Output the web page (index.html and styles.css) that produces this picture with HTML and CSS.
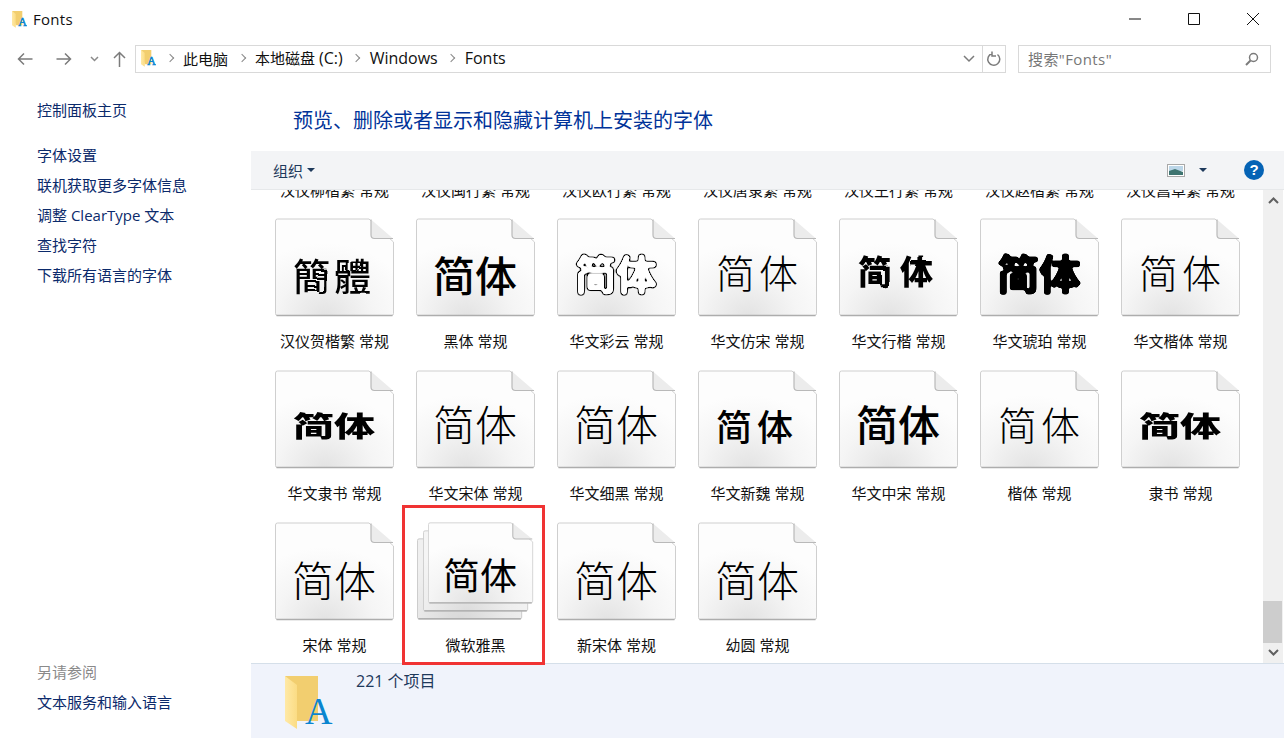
FILE: index.html
```html
<!DOCTYPE html>
<html lang="en">
<head>
    <meta charset="UTF-8">
    <title>Fonts</title>
    <link rel="stylesheet" href="styles.css">
</head>
<body>
    <svg class="defs" width="0" height="0">
        <defs>
            <radialGradient id="sheetFill" cx="0.42" cy="1" r="0.75">
                <stop offset="0" stop-color="#e3e3e3"/>
                <stop offset="0.55" stop-color="#f5f5f5"/>
                <stop offset="1" stop-color="#fdfdfd"/>
            </radialGradient>
            <linearGradient id="flapFill" x1="0" y1="0" x2="1" y2="0">
                <stop offset="0" stop-color="#ffe9a6"/>
                <stop offset="1" stop-color="#fbdc84"/>
            </linearGradient>
            <symbol id="sheet" viewBox="0 0 120 100" preserveAspectRatio="none">
                <path d="M2.500 1H94L118.500 24V95.500Q118.500 97.500 116.500 97.500H2.500Q0.500 97.500 0.500 95.500V3Q0.500 1 2.500 1Z" fill="url(#sheetFill)" stroke="#cfcfcf"/>
                <path d="M96 1.500V17Q96 20.500 99.500 20.500H118Z" fill="#ececec"/>
                <path d="M96 1.500V17Q96 20.500 99.500 20.500H118" fill="none" stroke="#b9b9b9" stroke-width="1.200"/>
                <path d="M1.500 97.500H117.500" stroke="#adadad" stroke-width="1.500"/>
            </symbol>
            <symbol id="fontFolder" viewBox="0 0 48 54">
                <path d="M0 0H33V45H12Z" fill="#f2ce6f"/>
                <path d="M0 0L12 9V53L0 45Z" fill="url(#flapFill)"/>
                <text x="20" y="48" class="folder-letter">A</text>
            </symbol>
            <filter id="puffy" x="-15%" y="-15%" width="130%" height="130%">
                <feGaussianBlur in="SourceAlpha" stdDeviation="1.500" result="soft"/>
                <feComponentTransfer in="soft" result="outer">
                    <feFuncA type="linear" slope="6" intercept="-0.500"/>
                </feComponentTransfer>
                <feComponentTransfer in="soft" result="innerAlpha">
                    <feFuncA type="linear" slope="6" intercept="-1.800"/>
                </feComponentTransfer>
                <feColorMatrix in="innerAlpha" type="matrix" values="0 0 0 0 1 0 0 0 0 1 0 0 0 0 1 0 0 0 1 0" result="inner"/>
                <feMerge>
                    <feMergeNode in="outer"/>
                    <feMergeNode in="inner"/>
                </feMerge>
            </filter>
            <filter id="fat" x="-15%" y="-15%" width="130%" height="130%">
                <feGaussianBlur in="SourceAlpha" stdDeviation="1.100" result="soft"/>
                <feComponentTransfer in="soft">
                    <feFuncA type="linear" slope="5" intercept="-1.200"/>
                </feComponentTransfer>
            </filter>
            <filter id="wobble" x="-10%" y="-10%" width="120%" height="120%">
                <feTurbulence type="fractalNoise" baseFrequency="0.05" numOctaves="1" seed="4" result="noise"/>
                <feDisplacementMap in="SourceGraphic" in2="noise" scale="3"/>
            </filter>
        </defs>
    </svg>

    <header class="titlebar">
        <div class="title">
            <svg class="title-icon"><use href="#fontFolder"/></svg>
            <span>Fonts</span>
        </div>
        <div class="window-buttons">
            <svg width="14" height="14" viewBox="0 0 14 14"><path d="M1 7H13" stroke="#111" fill="none"/></svg>
            <svg width="14" height="14" viewBox="0 0 14 14"><path d="M1.500 1.500H12.500V12.500H1.500Z" stroke="#111" fill="none"/></svg>
            <svg width="14" height="14" viewBox="0 0 14 14"><path d="M1 1L13 13M13 1L1 13" stroke="#111" fill="none"/></svg>
        </div>
    </header>

    <nav class="navbar">
        <div class="nav-arrows">
            <svg class="back-arrow" width="16" height="14" viewBox="0 0 16 14"><path d="M15.500 7H1.500M7 1.500L1.500 7L7 12.500" stroke="#7b7b7b" stroke-width="1.500" fill="none"/></svg>
            <svg class="forward-arrow" width="16" height="14" viewBox="0 0 16 14"><path d="M0.500 7H14.500M9 1.500L14.500 7L9 12.500" stroke="#7b7b7b" stroke-width="1.500" fill="none"/></svg>
            <svg class="recent-arrow" width="9" height="6" viewBox="0 0 9 6"><path d="M1 1L4.500 4.500L8 1" stroke="#8a8a8a" stroke-width="1.500" fill="none"/></svg>
            <svg class="up-arrow" width="13" height="16" viewBox="0 0 13 16"><path d="M6.500 16V1.500M1 7L6.500 1.500L12 7" stroke="#7b7b7b" stroke-width="1.500" fill="none"/></svg>
        </div>
        <div class="address">
            <svg class="address-icon"><use href="#fontFolder"/></svg>
            <span class="crumb-sep"></span><span>此电脑</span>
            <span class="crumb-sep"></span><span>本地磁盘 <span class="latin">(C:)</span></span>
            <span class="crumb-sep"></span><span class="latin">Windows</span>
            <span class="crumb-sep"></span><span class="latin">Fonts</span>
            <div class="address-end">
                <svg width="12" height="8" viewBox="0 0 12 8"><path d="M1 1L6 6L11 1" stroke="#7b7b7b" stroke-width="1.500" fill="none"/></svg>
                <svg class="refresh" width="16" height="16" viewBox="0 0 16 16"><path d="M6 2.500A6 6 0 1 0 11.500 3.500M6 0.500V5H10" stroke="#7b7b7b" stroke-width="1.500" fill="none"/></svg>
            </div>
        </div>
        <div class="search">
            <span>搜索"Fonts"</span>
            <svg width="14" height="14" viewBox="0 0 14 14"><circle cx="8.500" cy="5.500" r="4" stroke="#7b7b7b" stroke-width="1.500" fill="none"/><path d="M5.500 8.500L1 13" stroke="#7b7b7b" stroke-width="2"/></svg>
        </div>
    </nav>

    <div class="main">
        <aside class="sidebar">
            <div class="side-links">
                <a class="home-link">控制面板主页</a>
                <a>字体设置</a>
                <a>联机获取更多字体信息</a>
                <a>调整 ClearType 文本</a>
                <a>查找字符</a>
                <a>下载所有语言的字体</a>
            </div>
            <div class="side-bottom">
                <div class="see-also">另请参阅</div>
                <a>文本服务和输入语言</a>
            </div>
        </aside>

        <section class="content">
            <h1>预览、删除或者显示和隐藏计算机上安装的字体</h1>
            <div class="toolbar">
                <div class="organize">组织<span class="caret"></span></div>
                <div class="view-tools">
                    <svg width="18" height="13" viewBox="0 0 18 13">
                        <rect x="0.500" y="0.500" width="17" height="12" fill="#fff" stroke="#a8a8a8"/>
                        <rect x="2" y="2" width="14" height="5" fill="#bcd6e8"/>
                        <path d="M2 7L8 5L16 8V11H2Z" fill="#3e7470"/>
                    </svg>
                    <span class="caret view-caret"></span>
                    <span class="help">?</span>
                </div>
            </div>
            <div class="list-wrap">
                <div class="list">
                    <div class="label-row">
                        <span>汉仪柳楷繁 常规</span><span>汉仪闽行繁 常规</span><span>汉仪欧行繁 常规</span><span>汉仪唐隶繁 常规</span><span>汉仪王行繁 常规</span><span>汉仪赵楷繁 常规</span><span>汉仪菖草繁 常规</span>
                    </div>
                    <div class="grid">
                        <div class="tile"><div class="doc"><svg class="sheet"><use href="#sheet"/></svg><span class="sample trad">簡體</span></div><p>汉仪贺楷繁 常规</p></div>
                        <div class="tile"><div class="doc"><svg class="sheet"><use href="#sheet"/></svg><span class="sample medium">简体</span></div><p>黑体 常规</p></div>
                        <div class="tile"><div class="doc"><svg class="sheet"><use href="#sheet"/></svg><span class="sample cloud">简体</span></div><p>华文彩云 常规</p></div>
                        <div class="tile"><div class="doc"><svg class="sheet"><use href="#sheet"/></svg><span class="sample kai">简体</span></div><p>华文仿宋 常规</p></div>
                        <div class="tile"><div class="doc"><svg class="sheet"><use href="#sheet"/></svg><span class="sample brush">简体</span></div><p>华文行楷 常规</p></div>
                        <div class="tile"><div class="doc"><svg class="sheet"><use href="#sheet"/></svg><span class="sample heavy">简体</span></div><p>华文琥珀 常规</p></div>
                        <div class="tile"><div class="doc"><svg class="sheet"><use href="#sheet"/></svg><span class="sample kai">简体</span></div><p>华文楷体 常规</p></div>

                        <div class="tile"><div class="doc"><svg class="sheet"><use href="#sheet"/></svg><span class="sample wide">简体</span></div><p>华文隶书 常规</p></div>
                        <div class="tile"><div class="doc"><svg class="sheet"><use href="#sheet"/></svg><span class="sample thin">简体</span></div><p>华文宋体 常规</p></div>
                        <div class="tile"><div class="doc"><svg class="sheet"><use href="#sheet"/></svg><span class="sample raise">简体</span></div><p>华文细黑 常规</p></div>
                        <div class="tile"><div class="doc"><svg class="sheet"><use href="#sheet"/></svg><span class="sample wei">简体</span></div><p>华文新魏 常规</p></div>
                        <div class="tile"><div class="doc"><svg class="sheet"><use href="#sheet"/></svg><span class="sample medium raise">简体</span></div><p>华文中宋 常规</p></div>
                        <div class="tile"><div class="doc"><svg class="sheet"><use href="#sheet"/></svg><span class="sample kai">简体</span></div><p>楷体 常规</p></div>
                        <div class="tile"><div class="doc"><svg class="sheet"><use href="#sheet"/></svg><span class="sample wide">简体</span></div><p>隶书 常规</p></div>

                        <div class="tile"><div class="doc"><svg class="sheet"><use href="#sheet"/></svg><span class="sample">简体</span></div><p>宋体 常规</p></div>
                        <div class="tile selected-tile">
                            <div class="doc stack">
                                <svg class="sheet back2"><use href="#sheet"/></svg>
                                <svg class="sheet back1"><use href="#sheet"/></svg>
                                <svg class="sheet front"><use href="#sheet"/></svg>
                                <span class="sample stack-sample">简体</span>
                            </div>
                            <p>微软雅黑</p>
                        </div>
                        <div class="tile"><div class="doc"><svg class="sheet"><use href="#sheet"/></svg><span class="sample">简体</span></div><p>新宋体 常规</p></div>
                        <div class="tile"><div class="doc"><svg class="sheet"><use href="#sheet"/></svg><span class="sample">简体</span></div><p>幼圆 常规</p></div>
                    </div>
                </div>
                <div class="scrollbar">
                    <svg width="11" height="7" viewBox="0 0 11 7"><path d="M1 6L5.500 1.500L10 6" stroke="#606060" stroke-width="2" fill="none"/></svg>
                    <div class="track"><div class="thumb"></div></div>
                    <svg width="11" height="7" viewBox="0 0 11 7"><path d="M1 1L5.500 5.500L10 1" stroke="#606060" stroke-width="2" fill="none"/></svg>
                </div>
            </div>
            <footer class="status">
                <svg class="status-icon"><use href="#fontFolder"/></svg>
                <span>221 个项目</span>
            </footer>
        </section>
    </div>
</body>
</html>
```

FILE: styles.css
```css
html, body {
    margin: 0;
    height: 738px;
    overflow: hidden;
}
body {
    font-family: "Open Sans", "Noto Sans CJK SC", sans-serif;
    font-size: 15px;
    color: #111;
    background-color: #fff;
}
.defs {
    position: absolute;
}
.folder-letter {
    font-family: "Liberation Serif", serif;
    font-size: 38px;
    fill: #0a85cf;
    stroke: #0a85cf;
    stroke-width: var(--letter-weight, 0);
}

/* Title bar */
.titlebar {
    height: 38px;
    display: flex;
    justify-content: space-between;
    align-items: center;
}
.title {
    display: flex;
    align-items: center;
    gap: 6px;
    padding-left: 12px;
    letter-spacing: 0.3px;
}
.title-icon {
    width: 15px;
    height: 17px;
    --letter-weight: 2px;
}
.window-buttons {
    display: flex;
    gap: 45px;
    padding-right: 24px;
}

/* Address row */
.navbar {
    height: 28px;
    padding: 7px 0;
    display: flex;
    align-items: stretch;
}
.nav-arrows {
    width: 135px;
    display: flex;
    align-items: center;
    padding-left: 17px;
    box-sizing: border-box;
}
.forward-arrow {
    margin-left: 23px;
}
.recent-arrow {
    margin-left: 18px;
}
.up-arrow {
    margin-left: 14px;
}
.address {
    width: 871px;
    border: 1px solid #d9d9d9;
    box-sizing: border-box;
    display: flex;
    align-items: center;
    padding: 0 0 2px 5px;
}
.latin {
    font-size: 16px;
}
.address-icon {
    width: 15px;
    height: 17px;
    --letter-weight: 2px;
}
.crumb-sep {
    width: 6px;
    height: 6px;
    box-sizing: border-box;
    border-top: 1.500px solid #888;
    border-right: 1.500px solid #888;
    transform: rotate(45deg);
    margin: 0 10.500px;
}
.address-end {
    margin-left: auto;
    margin-bottom: -2px;
    height: 100%;
    display: flex;
    align-items: center;
    gap: 7px;
}
.refresh {
    border-left: 1px solid #d9d9d9;
    padding: 5px 3px;
}
.search {
    width: 253px;
    margin-left: 12px;
    border: 1px solid #d9d9d9;
    box-sizing: border-box;
    display: flex;
    justify-content: space-between;
    align-items: center;
    padding: 0 11px 0 9px;
    letter-spacing: 0.4px;
    color: #777;
}
.search span {
    margin-bottom: 2px;
}

/* Body of the window */
.main {
    display: flex;
    height: 658px;
}
.sidebar {
    width: 251px;
    padding: 20px 0 0 37px;
    box-sizing: border-box;
    display: flex;
    flex-direction: column;
    justify-content: space-between;
    color: #0b2a6b;
}
.side-links {
    display: flex;
    flex-direction: column;
    gap: 10px;
}
.side-links a, .side-bottom a {
    display: block;
    height: 20px;
    line-height: 20px;
    color: #0b2a6b;
}
.home-link {
    margin-bottom: 15px;
}
.side-bottom {
    padding-bottom: 26px;
}
.see-also {
    color: #8a8a8a;
    height: 20px;
    line-height: 20px;
    margin-bottom: 10px;
}
.content {
    flex: 1;
    min-width: 0;
    display: flex;
    flex-direction: column;
}
h1 {
    margin: 0;
    height: 71px;
    padding: 27px 0 0 42px;
    box-sizing: border-box;
    font-size: 20px;
    font-weight: 400;
    line-height: 28px;
    color: #003399;
}
.toolbar {
    height: 38px;
    background-color: #f3f4f6;
    border-bottom: 1px solid #e6e8ea;
    display: flex;
    justify-content: space-between;
    align-items: center;
    padding: 0 20px 0 22px;
    color: #1e395b;
}
.organize {
    display: flex;
    align-items: center;
    gap: 4px;
}
.caret {
    width: 0;
    height: 0;
    border-left: 4px solid transparent;
    border-right: 4px solid transparent;
    border-top: 4px solid #1e395b;
}
.view-tools {
    display: flex;
    align-items: center;
}
.view-caret {
    margin: 0 37px 0 14px;
}
.help {
    width: 20px;
    height: 20px;
    border-radius: 50%;
    background-color: #0563b5;
    color: #fff;
    font-family: "Liberation Sans", sans-serif;
    font-weight: 700;
    font-size: 15px;
    line-height: 20px;
    text-align: center;
}

/* Icon list */
.list-wrap {
    height: 474px;
    display: flex;
    border-bottom: 1px solid #d5dfe9;
    box-sizing: border-box;
}
.list {
    width: 1012px;
}
/* row that scrolled away under the toolbar, only the lower half of it shows */
.label-row {
    height: 10px;
    margin-bottom: 18px;
    overflow: hidden;
    padding-left: 24px;
    display: grid;
    grid-template-columns: repeat(7, 141px);
}
.label-row span {
    width: 118px;
    margin-top: -10px;
    padding-left: 1px;
    box-sizing: border-box;
    text-align: center;
    line-height: 20px;
}
.grid {
    display: grid;
    grid-template-columns: repeat(7, 141px);
    grid-auto-rows: 152px;
    padding-left: 24px;
}
.tile {
    width: 118px;
}
.tile p {
    margin: 13px 0 0;
    padding-left: 1px;
    line-height: 20px;
    text-align: center;
}
.doc {
    position: relative;
    width: 118px;
    height: 100px;
    display: flex;
    align-items: center;
    justify-content: center;
}
.sheet {
    position: absolute;
    left: 0;
    top: 0;
    width: 120px;
    height: 100px;
}
.sample {
    position: relative;
    padding-top: 13px;
    font-family: "Noto Sans CJK SC", sans-serif;
    font-size: 42px;
    line-height: 50px;
    font-weight: 300;
    color: #000;
    white-space: nowrap;
}
.medium {
    font-weight: 500;
    top: -1px;
}
.raise {
    top: -4px;
}
.thin {
    font-weight: 200;
    top: -4px;
}
.kai {
    font-weight: 300;
    font-size: 39px;
    letter-spacing: 4px;
    left: 2px;
    top: -4px;
}
.brush {
    font-weight: 900;
    font-size: 33px;
    letter-spacing: 9px;
    left: 2px;
    top: -5px;
    filter: url(#wobble);
}
.wei {
    font-weight: 500;
    font-size: 36px;
    letter-spacing: 5px;
    top: -2px;
}
.heavy {
    font-weight: 900;
    font-size: 42px;
    top: -3px;
    filter: url(#fat);
}
.wide {
    font-weight: 900;
    font-size: 38px;
    transform: scale(1.08, 0.74);
}
.trad {
    font-family: "Noto Sans CJK TC", sans-serif;
    font-weight: 500;
    font-size: 37px;
    letter-spacing: 4px;
    filter: url(#wobble);
}
.cloud {
    font-weight: 700;
    font-size: 41px;
    top: -3px;
    filter: url(#puffy);
}
.selected-tile {
    position: relative;
}
.selected-tile::after {
    content: "";
    position: absolute;
    left: -14px;
    top: -17px;
    width: 143px;
    height: 160px;
    border: 3px solid #f03333;
    box-sizing: border-box;
}
.stack .back2, .stack .back1, .stack .front {
    width: 106px;
    height: 83px;
}
.back2 {
    left: 1px;
    top: 16px;
    filter: brightness(0.95);
}
.back1 {
    left: 7px;
    top: 8px;
    filter: brightness(0.97);
}
.front {
    left: 12px;
    top: 0;
}
.stack-sample {
    left: 5px;
    top: -5px;
    font-weight: 400;
    font-size: 37px;
}

/* Scrollbar */
.scrollbar {
    width: 20px;
    background-color: #f0f0f0;
    display: flex;
    flex-direction: column;
    align-items: center;
    justify-content: space-between;
    padding: 7px 0;
    box-sizing: border-box;
}
.track {
    flex: 1;
    width: 100%;
    position: relative;
}
.thumb {
    position: absolute;
    left: 0;
    right: 1px;
    bottom: 6px;
    height: 42px;
    background-color: #cdcdcd;
}

/* Status bar */
.status {
    flex: 1;
    background-color: #f0f3fb;
    display: flex;
    padding: 7px 0 0 34px;
    gap: 23px;
    color: #1e395b;
}
.status-icon {
    width: 48px;
    height: 54px;
    margin-top: 5px;
}
.status span {
    line-height: 20px;
    font-size: 16px;
}
```
